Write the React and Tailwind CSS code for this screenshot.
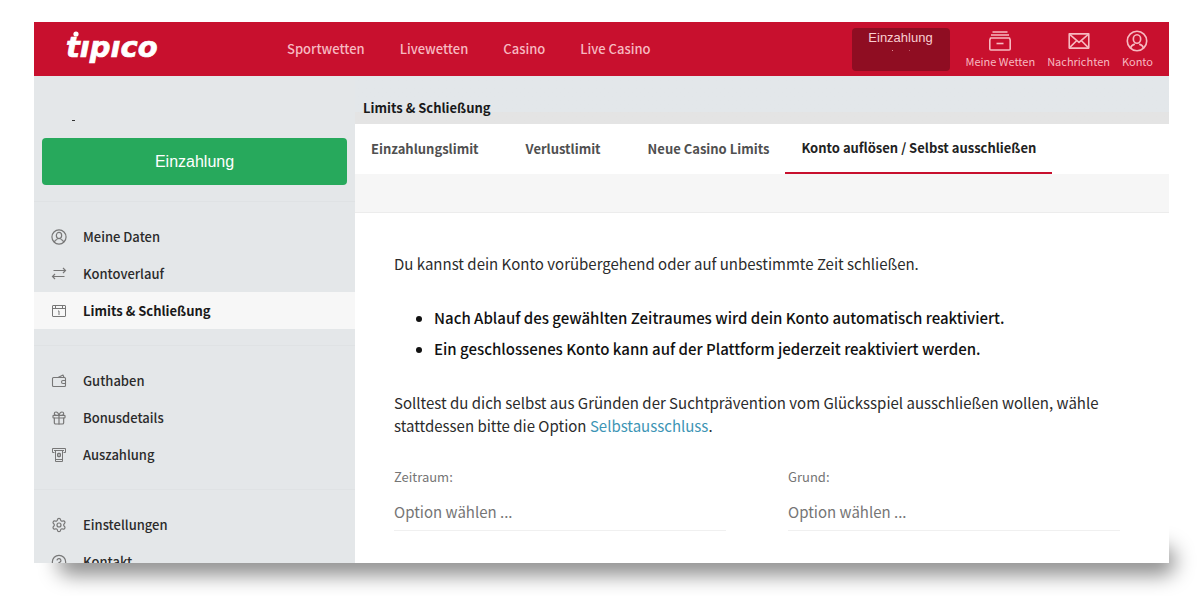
import React, { useState } from 'react';
import { Gift, Settings, CircleHelp } from 'lucide-react';

const UserIcon = ({ className }) => (
  <svg viewBox="0 0 24 24" className={className} fill="none" stroke="currentColor" strokeWidth="1.8">
    <circle cx="12" cy="12" r="10.6" />
    <ellipse cx="12" cy="9.8" rx="4" ry="4.6" />
    <path d="M5 19.6c.5-2.4 2-3.4 4.6-4.2M19 19.6c-.5-2.4-2-3.4-4.6-4.2" />
  </svg>
);

const BetsIcon = ({ className }) => (
  <svg viewBox="0 0 24 20" className={className} fill="none" stroke="currentColor" strokeWidth="1.6" strokeLinejoin="round">
    <path d="M4.5 1h15M3 4h18" />
    <path d="M2.5 7h19l.7 2v9a1 1 0 0 1-1 1H2.8a1 1 0 0 1-1-1V9z" />
    <path d="M8.5 12.5h7" />
  </svg>
);

const MailIcon = ({ className }) => (
  <svg viewBox="0 0 24 18" className={className} fill="none" stroke="currentColor" strokeWidth="1.8" strokeLinejoin="round">
    <rect x="1" y="1" width="22" height="16" />
    <path d="M1.5 1.5 12 10.5l10.5-9M1.5 16.5l8-8M22.5 16.5l-8-8" />
  </svg>
);

const TransferIcon = ({ className }) => (
  <svg viewBox="0 0 16 16" className={className} fill="none" stroke="currentColor" strokeWidth="1.2">
    <path d="M2.5 4.5h12M12 2l2.5 2.5L12 7M13.5 10.5h-12M4 8l-2.5 2.500L4 13" />
  </svg>
);

const LimitIcon = ({ className }) => (
  <svg viewBox="0 0 16 16" className={className} fill="none" stroke="currentColor" strokeWidth="1">
    <rect x="1.5" y="2.5" width="13" height="11" rx=".5" />
    <path d="M1.5 5.5h13M4.5 3v2.500M11.5 3v2.500M7 8h1v4" />
  </svg>
);

const WalletIcon = ({ className }) => (
  <svg viewBox="0 0 16 16" className={className} fill="none" stroke="currentColor" strokeWidth="1.1" strokeLinejoin="round">
    <path d="M2.5 4.5h11a1 1 0 0 1 1 1v7a1 1 0 0 1-1 1h-11a1 1 0 0 1-1-1v-7a1 1 0 0 1 1-1z" />
    <path d="M7 4.500l5-2.500 1 2.500M14.5 7.500h-2.500a1.500 1.500 0 0 0 0 3h2.500" />
  </svg>
);

const PayoutIcon = ({ className }) => (
  <svg viewBox="0 0 16 16" className={className} fill="none" stroke="currentColor" strokeWidth="1">
    <path d="M3.5 5.5h-2v-4h13v4h-2M3 3.5h10" />
    <path d="M4.5 3.5v11h7v-11M4.5 12.5h7M6.5 6.5h3v3h-3zM8 5.5v5" />
  </svg>
);

const GiftIcon = ({ className }) => <Gift className={className} strokeWidth={1.8} />;
const SettingsIcon = ({ className }) => <Settings className={className} strokeWidth={1.8} />;
const HelpIcon = ({ className }) => <CircleHelp className={className} strokeWidth={1.8} />;

const mainNav = ['Sportwetten', 'Livewetten', 'Casino', 'Live Casino'];

const accountNav = [
  { label: 'Meine Wetten', Icon: BetsIcon, size: 'w-6 h-5' },
  { label: 'Nachrichten', Icon: MailIcon, size: 'w-[22px] h-4' },
  { label: 'Konto', Icon: UserIcon, size: 'w-[22px] h-[22px]' }
];

const sidebarGroups = [
  [
    { label: 'Meine Daten', Icon: UserIcon },
    { label: 'Kontoverlauf', Icon: TransferIcon },
    { label: 'Limits & Schließung', Icon: LimitIcon, active: true }
  ],
  [
    { label: 'Guthaben', Icon: WalletIcon },
    { label: 'Bonusdetails', Icon: GiftIcon },
    { label: 'Auszahlung', Icon: PayoutIcon }
  ],
  [
    { label: 'Einstellungen', Icon: SettingsIcon },
    { label: 'Kontakt', Icon: HelpIcon }
  ]
];

const tabs = ['Einzahlungslimit', 'Verlustlimit', 'Neue Casino Limits'];

const Logo = () => (
  <a href="#" aria-label="tipico" className="block w-[94px] shrink-0">
    <svg viewBox="0 0 94 32" className="block h-8 w-[94px] overflow-visible" fill="#fff">
      <circle cx="10" cy="1" r="2.6" />
      <text x="0" y="24" fontFamily="DejaVu Sans, sans-serif" fontSize="29" fontWeight="700" fontStyle="italic" stroke="#fff" strokeWidth=".7">
        tıpıco
      </text>
    </svg>
  </a>
);

const Header = () => (
  <header className="flex h-[54px] shrink-0 items-center bg-[#c8102e] pr-4 pl-8 text-[#f7b9c0]">
    <Logo />
    <nav className="ml-[127px] flex gap-[35px] text-[13px] font-medium">
      {mainNav.map((item) => (
        <a key={item} href="#" className="whitespace-nowrap">{item}</a>
      ))}
    </nav>
    <div className="ml-auto flex items-center gap-4">
      <button className="flex h-[43px] w-[98px] flex-col items-center rounded bg-[#8f0d22] pt-[2px] font-['Liberation_Sans',sans-serif] text-[13px] leading-4 text-[#f9cdd2]">
        Einzahlung
        <span className="mt-1 flex gap-4" aria-hidden="true">
          <i className="size-px bg-[#e08a96]" />
          <i className="size-px bg-[#c05a6a]" />
        </span>
      </button>
      <div className="flex gap-3">
        {accountNav.map(({ label, Icon, size }) => (
          <a key={label} href="#" className="flex flex-col items-center text-[11px] leading-4 whitespace-nowrap">
            <span className="flex h-6 items-center"><Icon className={size} /></span>
            {label}
          </a>
        ))}
      </div>
    </div>
  </header>
);

const Sidebar = () => (
  <aside className="w-[321px] shrink-0 bg-[#e4e7e9] text-[13px] font-medium">
    <div className="px-2 pb-4">
      <div className="flex h-[62px] items-center pt-[26px] pl-[30px]">
        <i className="h-px w-[3px] bg-[#333]" aria-hidden="true" />
      </div>
      <button className="block h-[47px] w-full rounded bg-[#27a95c] font-['Liberation_Sans',sans-serif] text-base font-normal text-white">
        Einzahlung
      </button>
    </div>
    {sidebarGroups.map((group, index) => (
      <ul key={index} className="border-t border-[#dfe2e4] py-4">
        {group.map(({ label, Icon, active }) => (
          <li key={label}>
            <a
              href="#"
              className={`flex h-[37px] items-center gap-4 pl-[17px] ${active ? 'bg-[#f7f7f7] font-bold text-[#1a1a1a]' : 'text-[#2b2b2b]'}`}
            >
              <Icon className="size-4 text-[#777]" />
              {label}
            </a>
          </li>
        ))}
      </ul>
    ))}
  </aside>
);

const SelectField = ({ id, label }) => {
  const [value, setValue] = useState('');

  return (
    <div className="text-[#757575]">
      <label htmlFor={id} className="block text-[13px] leading-5">{label}</label>
      <select
        id={id}
        value={value}
        onChange={(e) => setValue(e.target.value)}
        className="mt-[6px] block h-[38px] w-full appearance-none border-b border-[#f0f0f0] bg-transparent text-[15px]"
      >
        <option value="">Option wählen ...</option>
      </select>
    </div>
  );
};

const App = () => {
  return (
    <div className="h-screen overflow-hidden bg-white pt-[22px] pr-[31px] pb-[33px] pl-[34px] font-['Noto_Sans_CJK_SC','Noto_Sans',sans-serif]">
      <div className="relative h-full">
        {/* Shadow below the window */}
        <div className="absolute right-[-6px] bottom-[-12px] left-6 h-7 rounded-xl bg-black/45 blur-[10px]" />

        <div className="relative flex h-full flex-col overflow-hidden bg-white">
          <Header />
          <div className="flex min-h-0 flex-1">
            <Sidebar />
            <main className="min-w-0 flex-1 text-[#2b2b2b]">
              <h1 className="h-12 bg-linear-to-b from-[#e3e7ea] from-75% to-[#e4e4e4] to-75% pt-[22px] pl-2 text-[13px] leading-5 font-bold text-[#1a1a1a]">
                Limits &amp; Schließung
              </h1>
              <nav className="flex h-[50px] text-[13px] font-bold text-[#505050]">
                <div className="flex gap-[15px]">
                  {tabs.map((tab) => (
                    <a key={tab} href="#" className="flex items-center px-4 whitespace-nowrap">{tab}</a>
                  ))}
                </div>
                <a href="#" className="flex items-center border-b-2 border-[#c8102e] px-4 whitespace-nowrap text-[#222]">
                  Konto auflösen / Selbst ausschließen
                </a>
              </nav>
              <div className="h-[39px] border-b border-[#ececec] bg-[#f6f6f6]" />

              <div className="pt-[39px] pr-[49px] pl-[39px] text-[15px] leading-[23px]">
                <p>Du kannst dein Konto vorübergehend oder auf unbestimmte Zeit schließen.</p>
                <ul className="mt-[27px] list-disc pl-10 leading-[31px] font-medium text-[#111]">
                  <li>Nach Ablauf des gewählten Zeitraumes wird dein Konto automatisch reaktiviert.</li>
                  <li>Ein geschlossenes Konto kann auf der Plattform jederzeit reaktiviert werden.</li>
                </ul>
                <p className="mt-[27px]">
                  Solltest du dich selbst aus Gründen der Suchtprävention vom Glücksspiel ausschließen wollen, wähle
                  stattdessen bitte die Option <a href="#" className="text-[#3d95b5]">Selbstausschluss</a>.
                </p>
                <form className="mt-[30px] grid grid-cols-2 gap-[62px]">
                  <SelectField id="zeitraum" label="Zeitraum:" />
                  <SelectField id="grund" label="Grund:" />
                </form>
              </div>
            </main>
          </div>
        </div>
      </div>
    </div>
  );
};

export default App;
